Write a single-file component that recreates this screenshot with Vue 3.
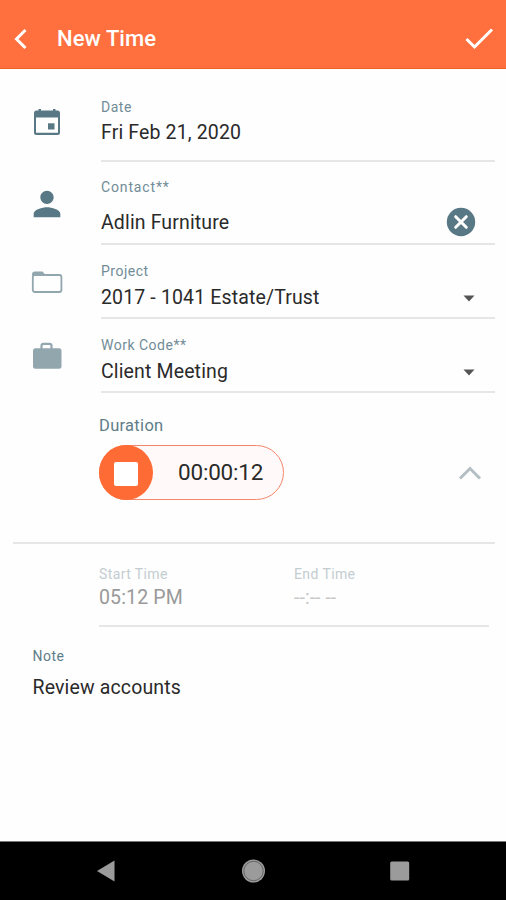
<script setup>
const fields = [
  { id: 'date', label: 'Date', value: 'Fri Feb 21, 2020', icon: 'calendar' },
  { id: 'contact', label: 'Contact**', value: 'Adlin Furniture', icon: 'person', action: 'clear' },
  { id: 'project', label: 'Project', value: '2017 - 1041 Estate/Trust', icon: 'folder', action: 'select' },
  { id: 'work', label: 'Work Code**', value: 'Client Meeting', icon: 'briefcase', action: 'select' },
]
</script>

<template>
  <div class="screen">
    <header class="bar">
      <svg class="back" width="14" height="22" viewBox="0 0 14 22"><path d="M12.500 2 3.500 11l9 9" /></svg>
      <h1>New Time</h1>
      <svg class="check" width="30" height="24" viewBox="0 0 30 24"><path d="M2.500 12l8 8L28 2.500" /></svg>
    </header>

    <main>
      <section v-for="f in fields" :key="f.id" class="row" :class="f.id">
        <div class="icon">
          <svg v-if="f.icon === 'calendar'" width="28" height="28" viewBox="0 0 28 28" fill="#587885"><path d="M5.500 1H8v3H5.500zM20 1h2.500v3H20z" /><path fill-rule="evenodd" d="M3.500 2.500h21Q27 2.500 27 5v19.500Q27 27 24.500 27h-21Q1 27 1 24.500V5Q1 2.500 3.500 2.500zM3 9.500v15.300h22V9.500z" /><path d="M15 15.300h6.500v6.200H15z" /></svg>
          <svg v-else-if="f.icon === 'person'" width="40" height="40" viewBox="0 0 24 24" fill="#587885"><path d="M12 12c2.210 0 4-1.790 4-4s-1.790-4-4-4-4 1.790-4 4 1.790 4 4 4zm0 2c-2.670 0-8 1.340-8 4v2h16v-2c0-2.660-5.330-4-8-4z" /></svg>
          <svg v-else-if="f.icon === 'folder'" width="32" height="24" viewBox="0 0 32 24"><path d="M1 4.500Q1 1.500 4 1.500h7.500l3.500 4H1z" fill="#92a6ae" /><rect x="1.800" y="5" width="28.600" height="17" rx="2" fill="none" stroke="#92a6ae" stroke-width="1.800" /></svg>
          <svg v-else width="30" height="28" viewBox="0 0 30 28"><path d="M9.500 7V3.800Q9.500 1.800 11.500 1.800h6Q19.500 1.800 19.500 3.800V7" fill="none" stroke="#92a6ae" stroke-width="2.200" /><rect x="1" y="6.300" width="28.500" height="20.500" rx="2.500" fill="#92a6ae" /></svg>
        </div>
        <div class="field">
          <div class="label">{{ f.label }}</div>
          <div class="line">
            <span class="value">{{ f.value }}</span>
            <svg v-if="f.action === 'clear'" class="clear" width="30" height="30" viewBox="0 0 30 30"><circle cx="15" cy="15" r="14.200" fill="#587885" /><path d="M9.700 9.700l10.600 10.600M20.300 9.700 9.700 20.300" stroke="#fff" stroke-width="3" stroke-linecap="round" /></svg>
            <svg v-else-if="f.action === 'select'" class="caret" width="12" height="7" viewBox="0 0 12 7"><path d="M.5.5h11L6 6.500z" fill="#555" /></svg>
          </div>
        </div>
      </section>

      <section class="duration">
        <div class="duration-label">Duration</div>
        <div class="duration-line">
          <div class="timer">
            <button class="stop" aria-label="Stop"><i></i></button>
            <span class="clock">00:00:12</span>
          </div>
          <svg class="up" width="24" height="16" viewBox="0 0 24 16"><path d="M2 13.500 12 3.500l10 10" /></svg>
        </div>
      </section>

      <section class="times">
        <div class="time">
          <div class="label">Start Time</div>
          <div class="value">05:12 PM</div>
        </div>
        <div class="time">
          <div class="label">End Time</div>
          <div class="value empty">--:-- --</div>
        </div>
      </section>

      <section class="note">
        <div class="label">Note</div>
        <div class="value">Review accounts</div>
      </section>
    </main>

    <nav class="nav">
      <svg width="20" height="22" viewBox="0 0 20 22"><path d="M1 11 18.500.5v21z" fill="#9b9b9b" /></svg>
      <svg width="26" height="26" viewBox="0 0 26 26"><circle cx="13.500" cy="13" r="11.500" fill="#9b9b9b" /><circle cx="13.500" cy="13" r="9.700" fill="none" stroke="#555" stroke-width=".8" /></svg>
      <svg width="20" height="20" viewBox="0 0 20 20"><rect x=".2" y=".5" width="19" height="19" rx="1.500" fill="#9b9b9b" /></svg>
    </nav>
  </div>
</template>

<style>
body { margin: 0; background: #fff; }
</style>

<style scoped>
.screen {
  display: flex;
  flex-direction: column;
  width: 506px;
  height: 900px;
  box-sizing: border-box;
  overflow: hidden;
  background: #fefefe;
  font-family: Roboto, "Liberation Sans", sans-serif;
  color: #2a2a2a;
}
svg { display: block; flex: none; }
.bar {
  display: flex;
  align-items: center;
  box-sizing: border-box;
  height: 69px;
  padding: 10px 12px 0 13px;
  background: #ff703e;
  border-bottom: 1px solid #ee6129;
}
.bar path { fill: none; stroke: #fff; stroke-width: 3; }
h1 {
  flex: 1;
  margin: 0 0 0 30px;
  color: #fff;
  font-size: 22px;
  line-height: 28px;
  font-weight: 500;
  letter-spacing: 0.05px;
}
main { flex: 1; }
.row { display: flex; box-sizing: border-box; padding-right: 11px; }
.icon { display: flex; justify-content: center; width: 94px; box-sizing: border-box; }
.field { flex: 1; box-sizing: border-box; border-bottom: 2px solid #e6e6e6; margin-left: 7px; }
.label { font-size: 14px; line-height: 16px; color: #718c97; letter-spacing: 0.5px; white-space: nowrap; }
.line { display: flex; align-items: center; justify-content: space-between; height: 24px; }
.value { font-size: 19.5px; line-height: 24px; letter-spacing: 0.14px; white-space: nowrap; }
.clear { margin-right: 19px; }
.caret { margin-right: 20px; }

.date { height: 93px; }
.date .icon { padding-top: 39px; }
.date .field { padding-top: 30px; }
.date .line { margin-top: 6px; }
.contact { height: 83px; }
.contact .icon { padding-top: 22px; }
.contact .field { padding-top: 17px; }
.contact .line { margin-top: 16px; }
.contact .clear { margin-bottom: 2px; }
.contact .label { letter-spacing: 0.85px; }
.project { height: 74px; }
.project .icon { padding-top: 25px; }
.project .field { padding-top: 18px; }
.project .line { margin-top: 7px; }
.project .caret, .work .caret { margin-top: 1px; }
.work { height: 74px; }
.work .icon { padding-top: 23px; }
.work .field { padding-top: 18px; }
.work .line { margin-top: 7px; }

.duration {
  box-sizing: border-box;
  height: 151px;
  margin: 0 11px 0 13px;
  padding: 23px 13px 0 86px;
  border-bottom: 2px solid #e6e6e6;
}
.duration-label { font-size: 16.5px; line-height: 20px; color: #5f7d89; letter-spacing: 0.3px; }
.duration-line { display: flex; align-items: center; justify-content: space-between; margin-top: 9px; }
.timer {
  display: flex;
  align-items: center;
  box-sizing: border-box;
  width: 185px;
  height: 55px;
  border: 1px solid #f5866a;
  border-radius: 28px;
  background: #fffaf9;
}
.stop {
  display: flex;
  align-items: center;
  justify-content: center;
  width: 54px;
  height: 55px;
  margin: -1px;
  padding: 0;
  border: 0;
  border-radius: 50%;
  background: #ff6b35;
}
.stop i { width: 24px; height: 24px; margin-top: 2px; border-radius: 2px; background: #fff; }
.clock { margin: 0 0 2px 26px; font-size: 22.5px; line-height: 28px; letter-spacing: -0.2px; }
.up path { fill: none; stroke: #b4bfc3; stroke-width: 3; }

.times {
  display: flex;
  box-sizing: border-box;
  height: 83px;
  margin: 0 17px 0 99px;
  padding-top: 22px;
  border-bottom: 2px solid #e6e6e6;
}
.time { width: 195px; }
.time .label { color: #c3cdd1; letter-spacing: 0.4px; }
.time .value { margin-top: 4px; color: #999; }
.time .empty { color: #c8c8c8; letter-spacing: 0.05px; }

.note { padding: 21px 0 0 32.5px; }
.note .label { color: #5f7d89; }
.note .value { margin-top: 12px; }

.nav {
  display: flex;
  align-items: center;
  justify-content: space-between;
  box-sizing: border-box;
  height: 59px;
  padding: 0 96px;
  border-top: 1px solid #777;
  background: #000;
}
</style>
